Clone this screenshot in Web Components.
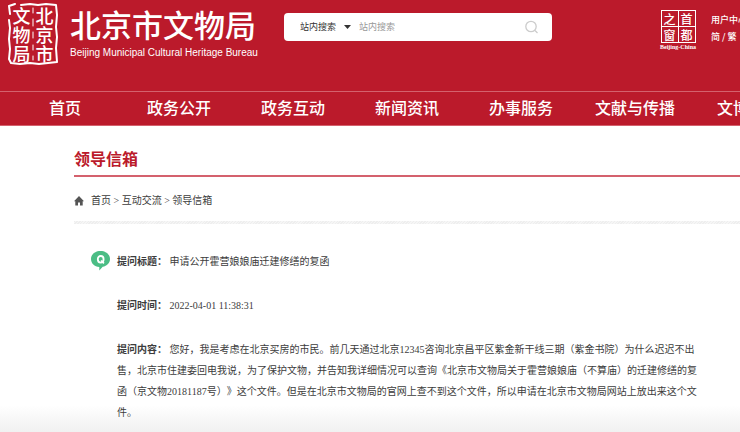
<!DOCTYPE html>
<html lang="zh-CN">
<head>
<meta charset="utf-8">
<title>领导信箱</title>
<style>
    body {
        --brand: #bb1a2b;
        margin: 0;
        overflow-x: hidden;
        background: #fff;
        color: #3c3c3c;
        font-family: "Liberation Serif", "Noto Sans CJK SC", serif;
        font-size: 10px;
        text-spacing-trim: space-all;
    }
</style>
</head>
<body>
<site-header>
    <site-brand slot="brand"></site-brand>
    <site-search slot="search"></site-search>
    <capital-emblem slot="emblem"></capital-emblem>
    <user-links slot="links"></user-links>
</site-header>
<site-nav>
    <nav-item>首页</nav-item>
    <nav-item>政务公开</nav-item>
    <nav-item>政务互动</nav-item>
    <nav-item>新闻资讯</nav-item>
    <nav-item>办事服务</nav-item>
    <nav-item>文献与传播</nav-item>
    <nav-item class="start">文博</nav-item>
</site-nav>
<mail-page>
    <span slot="title">领导信箱</span>
    <bread-crumb slot="crumb"></bread-crumb>
    <question-row marked>
        <span slot="label">提问标题：</span>申请公开霍营娘娘庙迁建修缮的复函
    </question-row>
    <question-row>
        <span slot="label">提问时间：</span>2022-04-01 11:38:31
    </question-row>
    <question-row>
        <span slot="label">提问内容：</span>您好，我是考虑在北京买房的市民。前几天通过北京12345咨询北京昌平区紫金新干线三期（紫金书院）为什么迟迟不出售，北京市住建委回电我说，为了保护文物，并告知我详细情况可以查询《北京市文物局关于霍营娘娘庙（不算庙）的迁建修缮的复函（京文物20181187号）》这个文件。但是在北京市文物局的官网上查不到这个文件，所以申请在北京市文物局网站上放出来这个文件。
    </question-row>
</mail-page>

<script>
/**
 * Base class: clones the template string of
 * the subclass into an open shadow root
 */
class BaseElement extends HTMLElement {
    constructor(){
        super();
        this.template = document.createElement('template');
        this.template.innerHTML = this.constructor.templateString;
        this.attachShadow({mode: 'open'});
        this.shadowRoot.append(
            this.template.content.cloneNode(true)
        );
    }
}

// Red band at the top of the page
class SiteHeader extends BaseElement {
    static templateString = `
<style>
    :host {
        display: block;
        background: var(--brand);
        color: #fff;
    }
    header {
        display: grid;
        grid-template-columns: 252px 24px minmax(160px, 268px) 1fr 38px 14px 29px;
        align-items: start;
        min-height: 91px;
        padding-left: 8px;
    }
    slot { display: block; }
    .search { grid-column: 3; padding-top: 13px; }
    .emblem { grid-column: 5; padding-top: 10px; }
    .links { grid-column: 7; padding-top: 11px; }
</style>
<header>
    <slot name="brand"></slot>
    <slot name="search" class="search"></slot>
    <slot name="emblem" class="emblem"></slot>
    <slot name="links" class="links"></slot>
</header>
`;
}

// Seal and name of the bureau
class SiteBrand extends BaseElement {
    static templateString = `
<style>
    :host {
        display: flex;
        gap: 12px;
        padding-top: 3px;
        white-space: nowrap;
    }
    .seal {
        display: grid;
        flex: none;
        width: 50px;
        height: 62px;
    }
    .seal > * { grid-area: 1 / 1; }
    .chars {
        display: grid;
        grid-template-columns: 20px 20px;
        grid-template-rows: repeat(3, 19px);
        place-content: center;
        justify-items: center;
        column-gap: 3px;
        font-family: "Noto Sans CJK SC", sans-serif;
        font-size: 18px;
        font-weight: 500;
        line-height: 19px;
    }
    .name {
        font-family: "Noto Sans CJK SC", sans-serif;
        font-size: 31px;
        font-weight: 500;
        line-height: 42px;
    }
    .latin {
        font-family: "Liberation Sans", sans-serif;
        font-size: 10px;
        line-height: 16px;
    }
</style>
<div class="seal">
    <svg width="50" height="62" viewBox="0 0 50 62" fill="none" stroke="#fff" stroke-width="2" stroke-linejoin="round" stroke-linecap="round" aria-hidden="true">
        <path d="M2 11 1 3 7 1M13 2 22 1 30 2 38 1 48 2 49 12 48 24 49 34 48 45 49 59 40 60 31 61 22 60 12 61 3 60 1 56 2 46 1 36 2 25 1 17"/>
        <path d="M25 5v5M25 16v7M25 29v6M25 42v5M25 53v4" stroke-width="1"/>
    </svg>
    <div class="chars">
        <span>文</span><span>北</span>
        <span>物</span><span>京</span>
        <span>局</span><span>市</span>
    </div>
</div>
<div>
    <div class="name">北京市文物局</div>
    <div class="latin">Beijing Municipal Cultural Heritage Bureau</div>
</div>
`;
}

// Search box with its scope drop-down
class SiteSearch extends BaseElement {
    static templateString = `
<style>
    :host { display: block; }
    form {
        display: flex;
        align-items: center;
        box-sizing: border-box;
        height: 28px;
        margin: 0;
        padding: 0 12px 0 16px;
        border-radius: 4px;
        background: #fff;
    }
    select, input, button {
        appearance: none;
        margin: 0;
        padding: 0;
        border: 0;
        outline: 0;
        background: none;
        font: inherit;
        font-size: 9px;
        color: #333;
    }
    select { width: 38px; }
    .arrow { flex: none; width: 7px; height: 4px; margin: 0 8px 0 6px; fill: #333; }
    input { flex: 1; min-width: 0; }
    input::placeholder { color: #999; opacity: 1; }
    button { display: flex; }
</style>
<form>
    <select aria-label="搜索范围"><option>站内搜索</option></select>
    <svg class="arrow" viewBox="0 0 7 4"><path d="M0 0h7L3.500 4z"/></svg>
    <input type="text" placeholder="站内搜索" aria-label="关键词">
    <button type="button" aria-label="搜索">
        <svg width="16" height="16" viewBox="0 0 16 16" fill="none" stroke="#ccc" stroke-width="1.300">
            <circle cx="7" cy="7.500" r="5.200"/>
            <path d="M11 11.500 13.500 14"/>
        </svg>
    </button>
</form>
`;
}

// Four-character emblem of the city portal
class CapitalEmblem extends BaseElement {
    static templateString = `
<style>
    :host {
        display: flex;
        flex-direction: column;
        align-items: center;
        white-space: nowrap;
    }
    .grid {
        display: grid;
        grid-template-columns: 1fr 1fr;
        gap: 1px;
        box-sizing: border-box;
        width: 35px;
        border: 1px solid #fff;
        background: #fff;
    }
    .grid span {
        background: var(--brand);
        font-family: "Noto Sans CJK SC", sans-serif;
        font-size: 12px;
        font-weight: 500;
        line-height: 15px;
        text-align: center;
    }
    .caption {
        font-size: 6px;
        font-weight: 700;
        line-height: 8px;
    }
</style>
<div class="grid">
    <span>之</span><span>首</span><span>窗</span><span>都</span>
</div>
<div class="caption">Beijing-China</div>
`;
}

class UserLinks extends BaseElement {
    static templateString = `
<style>
    :host {
        display: block;
        overflow: hidden;
        white-space: nowrap;
        font-family: "Noto Sans CJK SC", sans-serif;
        font-size: 9px;
        font-weight: 500;
        line-height: 17px;
    }
    a { color: inherit; text-decoration: none; }
</style>
<div><a href="#user">用户中心</a></div>
<div><a href="#jian">简</a> / <a href="#fan">繁</a></div>
`;
}

// Main navigation, runs past the window when that is narrow
class SiteNav extends BaseElement {
    static templateString = `
<style>
    :host {
        display: block;
        overflow: hidden;
        border-top: 1px solid #d4616d;
        border-bottom: 1px solid #d4616d;
        background: var(--brand);
    }
    nav {
        display: grid;
        grid-auto-flow: column;
        grid-auto-columns: 114px;
        padding-left: 8px;
    }
</style>
<nav><slot></slot></nav>
`;
}

class NavItem extends BaseElement {
    static templateString = `
<style>
    :host {
        display: block;
        text-align: center;
    }
    :host(.start) {
        padding-left: 25px;
        text-align: left;
    }
    a {
        color: #fff;
        font-size: 16px;
        font-weight: 500;
        line-height: 33px;
        text-decoration: none;
        white-space: nowrap;
    }
</style>
<a href="#"><slot></slot></a>
`;
}

// Page body: title, breadcrumb and list of rows
class MailPage extends BaseElement {
    static templateString = `
<style>
    :host {
        display: block;
        padding: 19px 0 10px 74px;
        background: linear-gradient(to top, #f0f0f0, #fff 28px);
    }
    h1 {
        margin: 0;
        border-bottom: 2px solid #d4616d;
        color: var(--brand);
        font-size: 16px;
        font-weight: 700;
        line-height: 30px;
    }
    .crumb {
        display: block;
        padding: 14px 0 10px;
    }
    .band {
        height: 3px;
        background: repeating-linear-gradient(135deg, #eee 0 1px, #f6f6f6 1px 2px);
    }
    .rows {
        display: grid;
        gap: 23px;
        padding: 27px 40px 0 17px;
    }
</style>
<main>
    <h1><slot name="title"></slot></h1>
    <slot name="crumb" class="crumb"></slot>
    <div class="band"></div>
    <div class="rows"><slot></slot></div>
</main>
`;
}

class BreadCrumb extends BaseElement {
    static templateString = `
<style>
    :host { display: block; }
    nav {
        display: flex;
        align-items: center;
        gap: 7px;
        line-height: 20px;
    }
    a { color: inherit; text-decoration: none; }
</style>
<nav>
    <svg width="10" height="10" viewBox="0 0 10 10" fill="#555" aria-hidden="true">
        <path d="M5 0 10 5.200H8.700V9.500H6V6.500H4V9.500H1.300V5.200H0z"/>
    </svg>
    <span><a href="#">首页</a> &gt; <a href="#">互动交流</a> &gt; <a href="#">领导信箱</a></span>
</nav>
`;
}

/**
 * One labelled row of the letter. With the
 * "marked" attribute it shows the Q bubble
 */
class QuestionRow extends BaseElement {
    static templateString = `
<style>
    :host {
        display: grid;
        grid-template-columns: 19px minmax(0, 1fr);
        column-gap: 7px;
        line-height: 21px;
    }
    svg { display: none; }
    :host([marked]) svg { display: block; }
    p { grid-column: 2; margin: 0; }
    b { font-weight: 700; }
</style>
<svg width="19" height="20" viewBox="0 0 19 20" aria-hidden="true">
    <path d="M9.500 0C15 0 19 3.500 19 8c0 4-3 7-7.300 7.800L8.300 19.500V16C3.500 15.600 0 12.500 0 8 0 3.500 4 0 9.500 0z" fill="#4bbd85"/>
    <ellipse cx="9.700" cy="8.300" rx="2.900" ry="3.300" fill="none" stroke="#fff" stroke-width="1.800"/>
    <path d="M10 9.500 13 12.300" stroke="#fff" stroke-width="1.600"/>
</svg>
<p><b><slot name="label"></slot></b><slot></slot></p>
`;
}

window.customElements.define('site-header', SiteHeader);
window.customElements.define('site-brand', SiteBrand);
window.customElements.define('site-search', SiteSearch);
window.customElements.define('capital-emblem', CapitalEmblem);
window.customElements.define('user-links', UserLinks);
window.customElements.define('site-nav', SiteNav);
window.customElements.define('nav-item', NavItem);
window.customElements.define('mail-page', MailPage);
window.customElements.define('bread-crumb', BreadCrumb);
window.customElements.define('question-row', QuestionRow);
</script>
</body>
</html>
